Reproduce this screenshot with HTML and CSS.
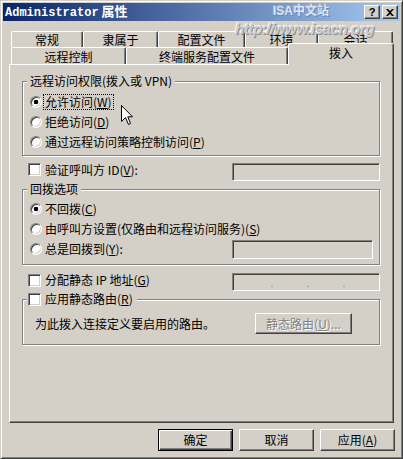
FILE: index.html
```html
<!DOCTYPE html>
<html lang="zh-CN">
<head>
<meta charset="utf-8">
<title>Administrator 属性</title>
<link rel="stylesheet" href="styles.css">
</head>
<body>
<div class="window">
  <div class="titlebar">
    <span class="title"><span class="title-latin">Administrator</span> 属性</span>
    <div class="tb-buttons">
      <span class="tb-btn">?</span>
      <span class="tb-btn"><svg width="8" height="7" viewBox="0 0 8 7"><path d="M0 0 L2 0 L4 2 L6 0 L8 0 L5 3.5 L8 7 L6 7 L4 5 L2 7 L0 7 L3 3.5 Z" fill="#000"/></svg></span>
    </div>
  </div>

  <div class="watermark wm1">ISA中文站</div>
  <div class="watermark wm2">http://www.isacn.org</div>

  <div class="content">
    <div class="tabs">
      <div class="tabrow back">
        <div class="tab t-cg">常规</div>
        <div class="tab t-ls">隶属于</div>
        <div class="tab t-pz">配置文件</div>
        <div class="tab t-hj">环境</div>
        <div class="tab t-hh">会话</div>
      </div>
      <div class="tabrow front">
        <div class="tab t-yc">远程控制</div>
        <div class="tab t-zd">终端服务配置文件</div>
        <div class="tab selected">拨入</div>
      </div>
    </div>

    <div class="panel">
      <div class="group g1">
        <div class="legend">远程访问权限(拨入或 VPN)</div>
        <div class="opt"><span class="radio checked"></span><span class="lbl focus">允许访问(<u>W</u>)</span></div>
        <div class="opt"><span class="radio"></span><span class="lbl">拒绝访问(<u>D</u>)</span></div>
        <div class="opt"><span class="radio"></span><span class="lbl">通过远程访问策略控制访问(<u>P</u>)</span></div>
      </div>

      <div class="row r-verify">
        <span class="check"></span><span class="lbl">验证呼叫方 ID(<u>V</u>):</span>
        <span class="field"></span>
      </div>

      <div class="group g2">
        <div class="legend">回拨选项</div>
        <div class="opt"><span class="radio checked"></span><span class="lbl">不回拨(<u>C</u>)</span></div>
        <div class="opt"><span class="radio"></span><span class="lbl">由呼叫方设置(仅路由和远程访问服务)(<u>S</u>)</span></div>
        <div class="opt"><span class="radio"></span><span class="lbl">总是回拨到(<u>Y</u>):</span><span class="field f-callback"></span></div>
      </div>

      <div class="row r-ip">
        <span class="check"></span><span class="lbl">分配静态 IP 地址(<u>G</u>)</span>
        <span class="field ip"><span class="dot">.</span><span class="dot">.</span><span class="dot">.</span></span>
      </div>

      <div class="group g3">
        <div class="legend legend-check"><span class="check"></span><span class="lbl">应用静态路由(<u>R</u>)</span></div>
        <div class="route-row">
          <span class="lbl">为此拨入连接定义要启用的路由。</span>
          <span class="btn disabled">静态路由(<u>U</u>)...</span>
        </div>
      </div>
    </div>

    <div class="buttons">
      <span class="btn default">确定</span>
      <span class="btn">取消</span>
      <span class="btn">应用(<u>A</u>)</span>
    </div>
  </div>

  <svg class="cursor" width="13" height="21" viewBox="0 0 13 21"><path d="M0.5 0.5 L0.5 16.5 L4.5 12.5 L7.5 19.5 L9.5 18.5 L6.8 11.8 L11.5 11.8 Z" fill="#fff" stroke="#000" stroke-width="1" stroke-linejoin="miter"/></svg>
</div>
</body>
</html>
```

FILE: styles.css
```css
* { box-sizing: border-box; }
html, body { margin: 0; padding: 0; }
body {
  width: 403px;
  height: 459px;
  overflow: hidden;
  background: #d4d0c8;
  font: 12px/14px "Noto Sans CJK SC", "Noto Sans", sans-serif;
  color: #000;
}
u { text-decoration: underline; text-underline-offset: 1px; }

.window {
  position: relative;
  width: 403px;
  height: 459px;
  background: #d4d0c8;
  border: 1px solid;
  border-color: #d4d0c8 #404040 #404040 #d4d0c8;
  box-shadow: inset 1px 1px #fff, inset -1px -1px #808080;
  padding: 2px;
}

/* title bar */
.titlebar {
  height: 18px;
  background: linear-gradient(to right, #0a246a, #a6caf0);
  display: flex;
  align-items: center;
  justify-content: space-between;
  padding: 0 2px;
}
.title {
  color: #fff;
  font-weight: bold;
  font-size: 13px;
  line-height: 18px;
  white-space: nowrap;
}
.title-latin { font-family: "Liberation Mono", monospace; font-size: 12px; }
.tb-buttons { display: flex; gap: 2px; }
.tb-btn {
  width: 16px;
  height: 14px;
  background: #d4d0c8;
  border: 1px solid;
  border-color: #fff #404040 #404040 #fff;
  box-shadow: inset -1px -1px #808080;
  display: flex;
  align-items: center;
  justify-content: center;
  font: bold 11px/1 "Liberation Sans", sans-serif;
}

/* watermark overlay */
.watermark {
  position: absolute;
  font-weight: bold;
  white-space: nowrap;
  pointer-events: none;
}
.wm1 {
  left: 272px;
  top: 3px;
  font-size: 12px;
  line-height: 14px;
  font-family: "Liberation Sans", "Noto Sans CJK SC", sans-serif;
  color: #dce4f0;
  text-shadow: 1px 1px 0 #6a86b6, -1px -1px 0 #9db3d6;
}
.wm2 {
  left: 234px;
  top: 19px;
  font-size: 15px;
  line-height: 17px;
  letter-spacing: -0.4px;
  font-style: italic;
  font-family: "Liberation Sans", sans-serif;
  color: #cdcdcd;
  text-shadow: 1px 1px 0 #8a8a8a, -1px -1px 0 #f4f4f4;
}

/* content */
.content { padding: 10px 0 0 6px; }

.tabs { width: 385px; }
.tabrow { display: flex; padding-left: 2px; }
.tabrow.back { height: 16px; }
.tabrow.front { height: 21px; margin-top: -4px; align-items: flex-end; padding-left: 2px; }
.tab {
  height: 16px;
  background: #d4d0c8;
  border-left: 1px solid #fff;
  border-top: 1px solid #fff;
  border-right: 1px solid #404040;
  box-shadow: inset -1px 0 #808080;
  border-radius: 2px 2px 0 0;
  display: flex;
  align-items: center;
  justify-content: center;
  white-space: nowrap;
}
.t-cg { width: 72px; }
.t-ls { width: 75px; }
.t-pz { width: 87px; }
.t-hj { width: 73px; }
.t-hh { width: 75px; }
.front .tab { height: 17px; padding-top: 2px; }
.t-yc { width: 115px; }
.t-zd { width: 162px; }
.front .tab.selected {
  width: 106px;
  height: 22px;
  margin-bottom: -1px;
  padding-top: 0;
  padding-bottom: 3px;
  position: relative;
  z-index: 2;
}

.panel {
  width: 385px;
  height: 359px;
  border: 1px solid;
  border-color: #fff #404040 #404040 #fff;
  box-shadow: inset -1px -1px #808080;
  padding: 16px 0 0 12px;
}

/* group boxes */
.group {
  width: 358px;
  border: 1px solid #808080;
  box-shadow: inset 1px 1px #fff, 1px 1px #fff;
  padding: 0 0 0 7px;
}
.legend {
  display: flex;
  align-items: center;
  width: fit-content;
  height: 14px;
  margin: -8px 0 4px -3px;
  padding: 0 3px;
  background: #d4d0c8;
  white-space: nowrap;
}
.g1 { padding-bottom: 3px; }
.g2 { margin-top: 8px; padding-bottom: 5px; }
.g2 .legend { margin-bottom: 3px; }
.g3 { margin-top: 8px; padding-bottom: 10px; }
.legend-check { margin-bottom: 7px; padding: 0 4px 0 1px; gap: 4px; }

.opt {
  height: 20px;
  display: flex;
  align-items: center;
  white-space: nowrap;
}
.radio {
  flex: none;
  width: 12px;
  height: 12px;
  margin-right: 3px;
  border-radius: 50%;
  background: #fff;
  border: 1px solid;
  border-color: #808080 #fff #fff #808080;
  box-shadow: inset 1px 1px #404040, inset -1px -1px #d4d0c8;
}
.radio.checked { background: radial-gradient(circle, #000 0 2px, #fff 2.6px); }
.lbl { white-space: nowrap; }
.focus {
  border: 1px dotted #000;
  padding: 0 1px;
  margin-left: -2px;
  line-height: 14px;
}

.check {
  flex: none;
  width: 13px;
  height: 13px;
  background: #fff;
  border: 1px solid;
  border-color: #808080 #fff #fff #808080;
  box-shadow: inset 1px 1px #404040, inset -1px -1px #d4d0c8;
}

.row {
  display: flex;
  align-items: flex-start;
  height: 18px;
  padding-left: 6px;
  width: 358px;
  gap: 4px;
}
.row .lbl { line-height: 13px; }
.r-verify { margin-top: 7px; }
.r-ip { margin-top: 8px; }
.r-ip .check { margin-top: 1px; }

.field {
  flex: none;
  margin-left: auto;
  width: 148px;
  height: 18px;
  background: #d4d0c8;
  border: 1px solid;
  border-color: #808080 #fff #fff #808080;
  box-shadow: inset 1px 1px #404040, inset -1px -1px #d4d0c8;
}
.f-callback { width: 141px; height: 19px; margin-right: 6px; }
.ip {
  display: flex;
  align-items: flex-end;
  padding-left: 37px;
  gap: 32px;
}
.dot { width: 4px; text-align: center; color: #808080; font: 10px/12px "Liberation Sans", sans-serif; }

.route-row {
  display: flex;
  align-items: center;
  height: 21px;
}
.route-row .lbl { margin-left: 5px; }

/* buttons */
.btn {
  display: flex;
  align-items: center;
  justify-content: center;
  width: 75px;
  height: 22px;
  background: #d4d0c8;
  border: 1px solid;
  border-color: #fff #404040 #404040 #fff;
  box-shadow: inset -1px -1px #808080;
  white-space: nowrap;
}
.btn.default {
  border-color: #000;
  box-shadow: inset 1px 1px #fff, inset -1px -1px #404040, inset -2px -2px #808080;
}
.btn.disabled {
  width: 97px;
  height: 21px;
  margin-left: auto;
  margin-right: 27px;
  color: #808080;
  text-shadow: 1px 1px 0 #fff;
}
.buttons {
  display: flex;
  justify-content: flex-end;
  gap: 6px;
  width: 386px;
  margin-top: 6px;
}

/* mouse pointer overlay */
.cursor {
  position: absolute;
  left: 120px;
  top: 104px;
}
```
